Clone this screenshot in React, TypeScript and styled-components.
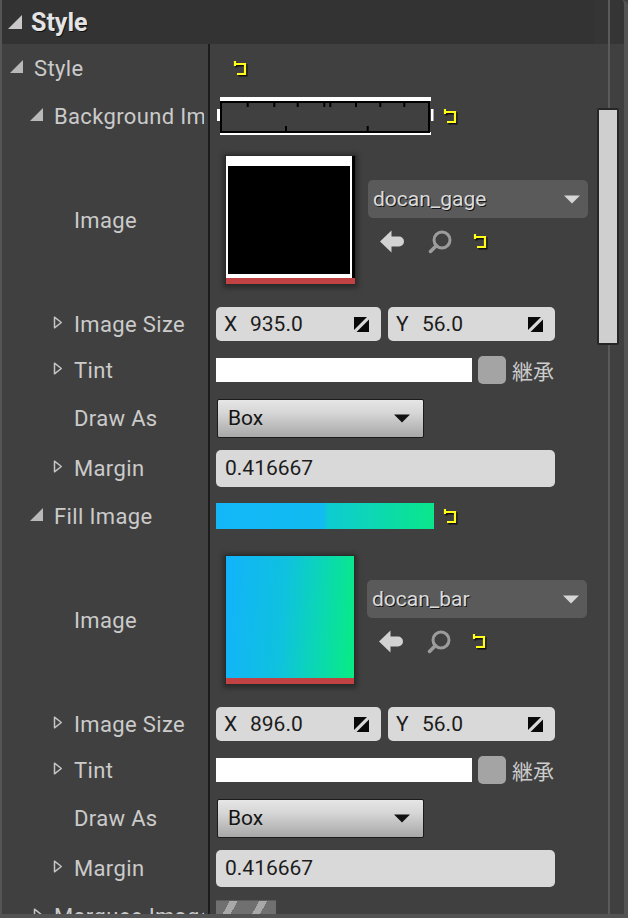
import React from 'react';
import styled, { createGlobalStyle } from 'styled-components';

const Global = createGlobalStyle`
  html, body { margin: 0; padding: 0; background: #404040; }
  body { font-family: Roboto, "Noto Sans", "Noto Sans CJK JP", sans-serif; }
`;

const Panel = styled.div`
  width: 628px;
  height: 918px;
  box-sizing: border-box;
  display: flex;
  overflow: hidden;
  background: #404040;
  border-left: 2px solid #555555;
  border-right: 4px solid #545454;
  border-bottom: 4px solid #535353;
  border-top-right-radius: 6px;
`;

const Content = styled.div`
  flex: 1;
  min-width: 0;
  display: flex;
  flex-direction: column;
  overflow: hidden;
`;

const Header = styled.div`
  height: 44px;
  flex: none;
  background: #333333;
  display: flex;
  align-items: center;
  gap: 9px;
  padding-left: 6px;
  box-sizing: border-box;
`;

const HeaderTitle = styled.span`
  font-family: Roboto, sans-serif;
  font-weight: 700;
  font-size: 25px;
  color: #e4e4e4;
  text-shadow: 1px 1px 0 #111;
`;

const Row = styled.div<{ $h: number }>`
  display: grid;
  grid-template-columns: 208px 1fr;
  height: ${p => p.$h}px;
  flex: none;
`;

const LabelCell = styled.div<{ $level: number }>`
  display: flex;
  align-items: center;
  box-sizing: border-box;
  padding-left: ${p => 8 + p.$level * 20}px;
  border-right: 2px solid #1c1c1c;
  white-space: nowrap;
  min-width: 0;
`;

const LabelClip = styled.div`
  display: flex;
  align-items: center;
  flex: 1;
  min-width: 0;
  margin-right: 4px;
  overflow: hidden;
`;

const ArrowSlot = styled.span<{ $offset: number }>`
  width: 24px;
  flex: none;
  display: flex;
  align-items: center;
  box-sizing: border-box;
  padding-left: ${p => p.$offset}px;
  transform: translateY(-2px);
`;

const LabelText = styled.span`
  font-family: Roboto, sans-serif;
  font-size: 22px;
  letter-spacing: 0.35px;
  color: #cbcbcb;
  white-space: nowrap;
`;

const ValueCell = styled.div<{ $top?: boolean }>`
  display: flex;
  align-items: ${p => (p.$top ? 'flex-start' : 'center')};
  padding-left: 6px;
  min-width: 0;
`;

const Spacer = styled.span<{ $w: number }>`
  width: ${p => p.$w}px;
  flex: none;
`;

const IconBox = styled.span`
  display: inline-flex;
  flex: none;
`;

const Preview = styled.div`
  display: flex;
  align-items: center;
  gap: 8px;
`;

const GradientBar = styled.div`
  width: 218px;
  height: 26px;
  background: linear-gradient(90deg, #13b7f8 0%, #11bcf0 50%, #0ecbd3 50.5%, #09e78b 100%);
`;

const ThumbFrame = styled.div`
  margin-top: 16px;
  margin-left: 10px;
  box-shadow: 0 0 0 1px #2b2b2b, 0 1px 5px 3px rgba(0, 0, 0, 0.35);
  display: flex;
  flex-direction: column;
  flex: none;
`;

const ThumbGradient = styled.div`
  width: 128px;
  height: 122px;
  background: linear-gradient(95deg, #12b3fb 0%, #0fc2de 45%, #0bd6b6 70%, #08ec82 100%);
`;

const ThumbStrip = styled.div`
  width: 128px;
  height: 6px;
  background: #c04242;
`;

const AssetColumn = styled.div`
  margin-top: 40px;
  margin-left: 13px;
  display: flex;
  flex-direction: column;
  gap: 12px;
`;

const AssetCombo = styled.div`
  width: 220px;
  height: 38px;
  box-sizing: border-box;
  background: #5a5a5a;
  border-radius: 5px;
  display: flex;
  align-items: center;
  justify-content: space-between;
  padding: 0 8px 0 5px;
  font-family: Roboto, sans-serif;
  font-size: 21px;
  color: #dcdcdc;
  text-shadow: 1px 1px 0 #161616;
`;

const AssetTools = styled.div`
  display: flex;
  align-items: center;
  padding-left: 12px;
  height: 23px;
`;

const NumField = styled.div<{ $w: number }>`
  width: ${p => p.$w}px;
  height: 34px;
  box-sizing: border-box;
  background: #d9d9d9;
  border-radius: 5px;
  display: flex;
  align-items: center;
  padding: 0 12px 0 8px;
  font-family: Roboto, sans-serif;
  font-size: 21px;
  color: #1c1c1c;
`;

const Axis = styled.span`
  width: 14px;
  flex: none;
`;

const NumValue = styled.span`
  margin-left: 12px;
  flex: 1;
`;

const FieldPair = styled.div`
  display: flex;
  gap: 7px;
`;

const TextField = styled.div`
  width: 339px;
  height: 37px;
  box-sizing: border-box;
  background: #d9d9d9;
  border-radius: 5px;
  display: flex;
  align-items: center;
  padding-left: 9px;
  font-family: Roboto, sans-serif;
  font-size: 21px;
  color: #1c1c1c;
`;

const ColorBar = styled.div`
  width: 256px;
  height: 24px;
  background: #ffffff;
`;

const InheritBox = styled.div`
  width: 28px;
  height: 28px;
  margin-left: 6px;
  border-radius: 5px;
  background: #a4a4a4;
`;

const InheritText = styled.span`
  margin-left: 6px;
  font-family: "Noto Sans CJK JP", "Noto Sans CJK SC", sans-serif;
  font-size: 21px;
  color: #cccccc;
`;

const EnumCombo = styled.div`
  margin-left: 1px;
  width: 207px;
  height: 39px;
  box-sizing: border-box;
  border: 1px solid #1b1b1b;
  border-radius: 2px;
  background: linear-gradient(180deg, #e6e6e6 0%, #d6d6d6 35%, #b9b9b9 75%, #a8a8a8 100%);
  display: flex;
  align-items: center;
  justify-content: space-between;
  padding: 0 13px 0 10px;
  font-family: Roboto, sans-serif;
  font-size: 21px;
  color: #141414;
`;

const MarqueeThumb = styled.div`
  width: 60px;
  height: 32px;
  background: repeating-linear-gradient(118deg, #707070 0 12px, #a9a9a9 12px 19px, #707070 19px 26px);
  border-top: 1px solid #5c5c5c;
`;

const ScrollColumn = styled.div`
  width: 30px;
  flex: none;
  display: flex;
  flex-direction: column;
  background:
    linear-gradient(90deg, transparent 14.5px, #5a5a5a 14.5px, #5a5a5a 16.5px, transparent 16.5px),
    linear-gradient(180deg, #353535 0 44px, #404040 44px);
`;

const ScrollThumb = styled.div`
  margin-top: 108px;
  margin-left: 3px;
  width: 22px;
  height: 237px;
  box-sizing: border-box;
  background: #cfcfcf;
  border: 2px solid #262626;
  border-radius: 2px;
`;

/* ---------- icons ---------- */

const OpenArrow = ({ size = 13, color = '#b9b9b9' }: { size?: number; color?: string }) => (
  <svg width={size} height={size} viewBox="0 0 13 13">
    <path d="M13 0 V13 H0 Z" fill={color} />
  </svg>
);

const ClosedArrow = () => (
  <svg width="10" height="13" viewBox="0 0 10 13">
    <path d="M1.5 1.2 L8.3 6.5 L1.5 11.8 Z" fill="none" stroke="#c4c4c4" strokeWidth="1.5" strokeLinejoin="round" />
  </svg>
);

const ResetIcon = () => (
  <svg width="18" height="17" viewBox="0 0 18 17">
    <path d="M3 1 V6 M2 4 H13 V14 H5" fill="none" stroke="#111" strokeWidth="2.2" transform="translate(1.4 1.4)" />
    <path d="M3 1 V6 M2 4 H13 V14 H5" fill="none" stroke="#ffff1a" strokeWidth="2.2" />
  </svg>
);

const BackIcon = () => (
  <svg width="24" height="23" viewBox="0 0 24 23">
    <path d="M0 11.5 L11.5 0.5 V6.5 H19 A5 5 0 0 1 19 16.5 H11.5 V22.5 Z" fill="#d2d2d2" />
  </svg>
);

const FindIcon = () => (
  <svg width="24" height="24" viewBox="0 0 24 24">
    <circle cx="14" cy="10" r="8" fill="none" stroke="#9c9c9c" strokeWidth="3" />
    <path d="M8.5 15.5 L2.5 21.5" stroke="#9c9c9c" strokeWidth="3.5" strokeLinecap="round" />
  </svg>
);

const ComboArrow = ({ color }: { color: string }) => (
  <svg width="16" height="9" viewBox="0 0 16 9">
    <path d="M0 0.5 H16 L8 8.5 Z" fill={color} />
  </svg>
);

const SpinIcon = () => (
  <svg width="15" height="15" viewBox="0 0 15 15">
    <path d="M0 0 H13 L0 13 Z" fill="#0a0a0a" />
    <path d="M15 2.5 V15 H2.5 Z" fill="#0a0a0a" />
  </svg>
);

const GagePreview = () => {
  const top = [30.7, 57.3, 80.7, 107.3, 113.3, 139, 163.3, 187.3];
  const bottom = [69, 150.7];
  return (
    <svg width="218" height="40" viewBox="0 0 218 40">
      <rect x="4" y="1" width="211" height="4" fill="#fff" />
      <rect x="4" y="36" width="211" height="3" fill="#fff" />
      <rect x="1" y="13" width="3" height="12" fill="#fff" />
      <rect x="215" y="13" width="2.5" height="12" fill="#fff" />
      <rect x="5" y="6" width="208" height="30" fill="none" stroke="#000" strokeWidth="2" />
      {top.map(x => (
        <rect key={x} x={x} y="6" width="2" height="5" fill="#000" />
      ))}
      {bottom.map(x => (
        <rect key={x} x={x} y="30" width="2" height="5" fill="#000" />
      ))}
    </svg>
  );
};

const GageThumb = () => (
  <svg width="129" height="128" viewBox="0 0 129 128" style={{ display: 'block' }}>
    <rect x="0" y="0" width="126" height="122" fill="#fff" />
    <rect x="2" y="10" width="122" height="108" fill="#000" />
    <rect x="126" y="0" width="3" height="122" fill="#000" />
    <rect x="0" y="122" width="129" height="6" fill="#c04242" />
  </svg>
);

const BarThumb = () => (
  <>
    <ThumbGradient />
    <ThumbStrip />
  </>
);

/* ---------- building blocks ---------- */

type ArrowKind = 'open' | 'closed' | 'none';

const PropLabel = ({ level, arrow, children }: { level: number; arrow: ArrowKind; children: React.ReactNode }) => (
  <LabelCell $level={level}>
    <LabelClip>
      <ArrowSlot $offset={arrow === 'closed' ? 3 : 0}>
        {arrow === 'open' && <OpenArrow />}
        {arrow === 'closed' && <ClosedArrow />}
      </ArrowSlot>
      <LabelText>{children}</LabelText>
    </LabelClip>
  </LabelCell>
);

const BrushGroup = ({
  title,
  preview,
  thumb,
  asset,
  sizeX,
}: {
  title: string;
  preview: React.ReactNode;
  thumb: React.ReactNode;
  asset: string;
  sizeX: string;
}) => (
  <>
    <Row $h={48}>
      <PropLabel level={1} arrow="open">{title}</PropLabel>
      <ValueCell>
        <Preview>
          {preview}
          <IconBox><ResetIcon /></IconBox>
        </Preview>
      </ValueCell>
    </Row>
    <Row $h={160}>
      <PropLabel level={2} arrow="none">Image</PropLabel>
      <ValueCell $top>
        <ThumbFrame>{thumb}</ThumbFrame>
        <AssetColumn>
          <AssetCombo>
            <span>{asset}</span>
            <ComboArrow color="#d6d6d6" />
          </AssetCombo>
          <AssetTools>
            <IconBox><BackIcon /></IconBox>
            <Spacer $w={24} />
            <IconBox><FindIcon /></IconBox>
            <Spacer $w={20} />
            <IconBox><ResetIcon /></IconBox>
          </AssetTools>
        </AssetColumn>
      </ValueCell>
    </Row>
    <Row $h={48}>
      <PropLabel level={2} arrow="closed">Image Size</PropLabel>
      <ValueCell>
        <FieldPair>
          <NumField $w={165}>
            <Axis>X</Axis>
            <NumValue>{sizeX}</NumValue>
            <SpinIcon />
          </NumField>
          <NumField $w={167}>
            <Axis>Y</Axis>
            <NumValue>56.0</NumValue>
            <SpinIcon />
          </NumField>
        </FieldPair>
      </ValueCell>
    </Row>
    <Row $h={44}>
      <PropLabel level={2} arrow="closed">Tint</PropLabel>
      <ValueCell>
        <ColorBar />
        <InheritBox />
        <InheritText>継承</InheritText>
      </ValueCell>
    </Row>
    <Row $h={52}>
      <PropLabel level={2} arrow="none">Draw As</PropLabel>
      <ValueCell>
        <EnumCombo>
          <span>Box</span>
          <ComboArrow color="#111" />
        </EnumCombo>
      </ValueCell>
    </Row>
    <Row $h={48}>
      <PropLabel level={2} arrow="closed">Margin</PropLabel>
      <ValueCell>
        <TextField>0.416667</TextField>
      </ValueCell>
    </Row>
  </>
);

export default function App() {
  return (
    <>
      <Global />
      <Panel>
        <Content>
          <Header>
            <OpenArrow size={14} color="#c9c9c9" />
            <HeaderTitle>Style</HeaderTitle>
          </Header>
          <Row $h={48}>
            <PropLabel level={0} arrow="open">Style</PropLabel>
            <ValueCell>
              <Spacer $w={16} />
              <IconBox><ResetIcon /></IconBox>
            </ValueCell>
          </Row>
          <BrushGroup
            title="Background Image"
            preview={<GagePreview />}
            thumb={<GageThumb />}
            asset="docan_gage"
            sizeX="935.0"
          />
          <BrushGroup
            title="Fill Image"
            preview={<GradientBar />}
            thumb={<BarThumb />}
            asset="docan_bar"
            sizeX="896.0"
          />
          <Row $h={48}>
            <PropLabel level={1} arrow="closed">Marquee Image</PropLabel>
            <ValueCell>
              <MarqueeThumb />
            </ValueCell>
          </Row>
        </Content>
        <ScrollColumn>
          <ScrollThumb />
        </ScrollColumn>
      </Panel>
    </>
  );
}
